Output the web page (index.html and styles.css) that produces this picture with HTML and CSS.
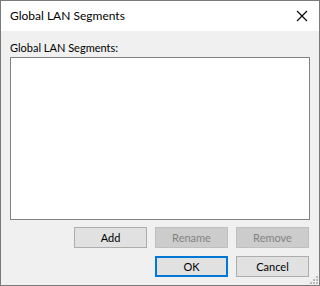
FILE: index.html
```html
<!DOCTYPE html>
<html lang="en">
<head>
    <meta charset="UTF-8">
    <title>Global LAN Segments</title>
    <link rel="stylesheet" href="styles.css">
</head>
<body>
    <div class="window">
        <div class="titlebar">
            <span class="title">Global LAN Segments</span>
            <svg class="close" width="12" height="12" viewBox="0 0 12 12">
                <path d="M1 1 L11 11 M11 1 L1 11" stroke="#000" stroke-width="1.1" fill="none"/>
            </svg>
        </div>
        <div class="content">
            <label class="label">Global LAN Segments:</label>
            <div class="listbox"></div>
            <div class="row">
                <button class="btn">Add</button>
                <button class="btn" disabled>Rename</button>
                <button class="btn" disabled>Remove</button>
            </div>
            <div class="row">
                <button class="btn btn-default">OK</button>
                <button class="btn">Cancel</button>
            </div>
            <!-- size grip -->
            <div class="grip">
                <span class="dot d1"></span>
                <span class="dot d2"></span>
                <span class="dot d3"></span>
                <span class="dot d4"></span>
                <span class="dot d5"></span>
                <span class="dot d6"></span>
            </div>
        </div>
    </div>
</body>
</html>
```

FILE: styles.css
```css
body {
    margin: 0;
    font-family: Lato, "Noto Sans", sans-serif;
    font-size: 11px;
    color: #000;
}
.window {
    width: 320px;
    height: 286px;
    box-sizing: border-box;
    border: 1px solid #7a7a7a;
    display: flex;
    flex-direction: column;
    background: #f0f0f0;
}
.titlebar {
    height: 30px;
    background: #fff;
    display: flex;
    align-items: center;
    justify-content: space-between;
    padding: 0 9px;
    flex-shrink: 0;
}
.title {
    font-size: 12px;
    padding-bottom: 1px;
}
.close {
    margin-right: 2px;
    margin-bottom: 1px;
}
.content {
    flex: 1;
    position: relative;
    padding: 8px 9px 0 9px;
    display: flex;
    flex-direction: column;
}
.label {
    height: 18px;
    line-height: 18px;
    font-size: 11px;
}
.listbox {
    height: 163px;
    box-sizing: border-box;
    border: 1px solid #828282;
    background: #fff;
    margin-bottom: 7px;
}
.row {
    display: flex;
    justify-content: flex-end;
    gap: 8px;
    margin-bottom: 8px;
    padding-right: 1px;
}
.btn {
    width: 73px;
    height: 21px;
    box-sizing: border-box;
    border: 1px solid #adadad;
    background: #e1e1e1;
    font-family: inherit;
    font-size: 11px;
    color: #000;
    padding: 0;
    line-height: 18px;
}
.btn:disabled {
    background: #cccccc;
    border-color: #bfbfbf;
    color: #838383;
}
.btn-default {
    border: 2px solid #0078d7;
}
.grip {
    position: absolute;
    right: 1px;
    bottom: 1px;
    display: grid;
    grid-template-columns: repeat(3, 2px);
    grid-template-rows: repeat(3, 2px);
    gap: 1px;
}
.dot {
    background: #b9b9b9;
}
.d1 { grid-area: 1 / 3; }
.d2 { grid-area: 2 / 2; }
.d3 { grid-area: 2 / 3; }
.d4 { grid-area: 3 / 1; }
.d5 { grid-area: 3 / 2; }
.d6 { grid-area: 3 / 3; }
```
